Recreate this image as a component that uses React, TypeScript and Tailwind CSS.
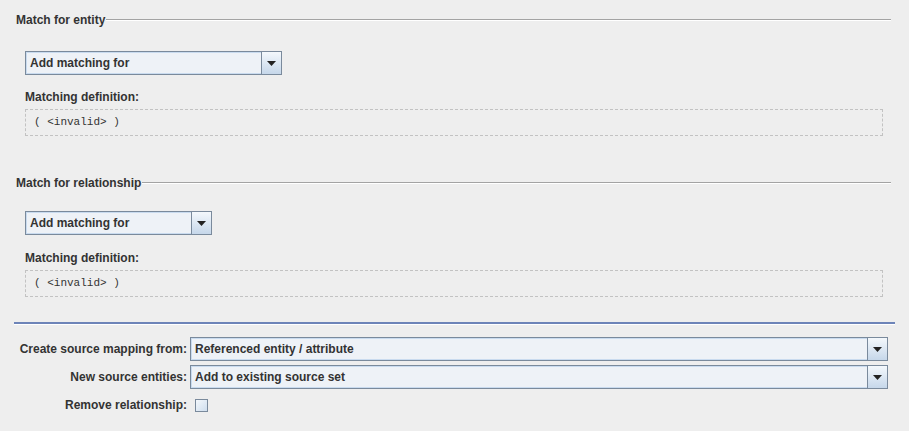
import React from 'react';

const Combo = ({ text, width }: { text: string; width?: string }) => (
  <div className={`flex h-[24px] border border-[#7a8a9c] bg-[#eef2f7] ${width ?? 'flex-1'}`}>
    <div className="flex-1 flex items-center pl-[3px] border border-[#c9dbef] border-r-0 text-[12px] font-bold text-[#333333] whitespace-nowrap overflow-hidden">
      {text}
    </div>
    <div className="w-[20px] flex items-center justify-center border-l border-[#7a8a9c] bg-gradient-to-b from-[#f4f8fc] to-[#c6d7ea]">
      <svg width="9" height="5" viewBox="0 0 9 5">
        <path d="M0 0 H9 L4.5 5 Z" fill="#222" />
      </svg>
    </div>
  </div>
);

type SectionProps = {
  title: string;
  comboWidth: string;
  mt: string;
  comboMt: string;
  defMt: string;
};

const Section = ({ title, comboWidth, mt, comboMt, defMt }: SectionProps) => (
  <div className={`pl-[16px] pr-[18px] ${mt}`}>
    <div className="flex items-center h-[14px]">
      <span className="text-[12px] font-bold text-[#333333] pr-[1px]">{title}</span>
      <div className="flex-1 border-t border-[#a3a3a3] border-b border-b-white" />
    </div>
    <div className="ml-[9px] mr-[8px]">
      <div className={`${comboMt} flex`}>
        <Combo text="Add matching for" width={comboWidth} />
      </div>
      <div className={`${defMt} h-[14px] leading-[14px] text-[12px] font-bold text-[#333333]`}>Matching definition:</div>
      <div className="mt-[5px] h-[27px] border border-dashed border-[#c2c2c2] flex items-center pl-[8px] font-['Liberation_Mono',monospace] text-[11px] text-[#333333]">
        ( &lt;invalid&gt; )
      </div>
    </div>
  </div>
);

export default function App() {
  return (
    <div className="w-[909px] h-[431px] bg-[#eeeeee] font-['Liberation_Sans',Arial,sans-serif] overflow-hidden pt-[13px]">
      <Section title="Match for entity" comboWidth="w-[257px]" mt="" comboMt="mt-[24px]" defMt="mt-[15px]" />
      <Section title="Match for relationship" comboWidth="w-[187px]" mt="mt-[40px]" comboMt="mt-[21px]" defMt="mt-[16px]" />

      <div className="mt-[25px] ml-[14px] mr-[14px] border-t-2 border-[#6d84b8] border-b border-b-white" />

      <div className="mt-[12px] ml-[14px] mr-[21px] flex flex-col gap-[4px] text-[12px] font-bold text-[#333333]">
        <div className="flex items-center gap-[3px]">
          <div className="w-[173px] text-right">Create source mapping from:</div>
          <Combo text="Referenced entity / attribute" />
        </div>
        <div className="flex items-center gap-[3px]">
          <div className="w-[173px] text-right">New source entities:</div>
          <Combo text="Add to existing source set" />
        </div>
        <div className="flex items-center gap-[8px] h-[24px]">
          <div className="w-[173px] text-right">Remove relationship:</div>
          <div className="w-[13px] h-[13px] border border-[#7a8a9c] bg-gradient-to-br from-[#f4f8fc] to-[#cfdeee]" />
        </div>
      </div>
    </div>
  );
}
